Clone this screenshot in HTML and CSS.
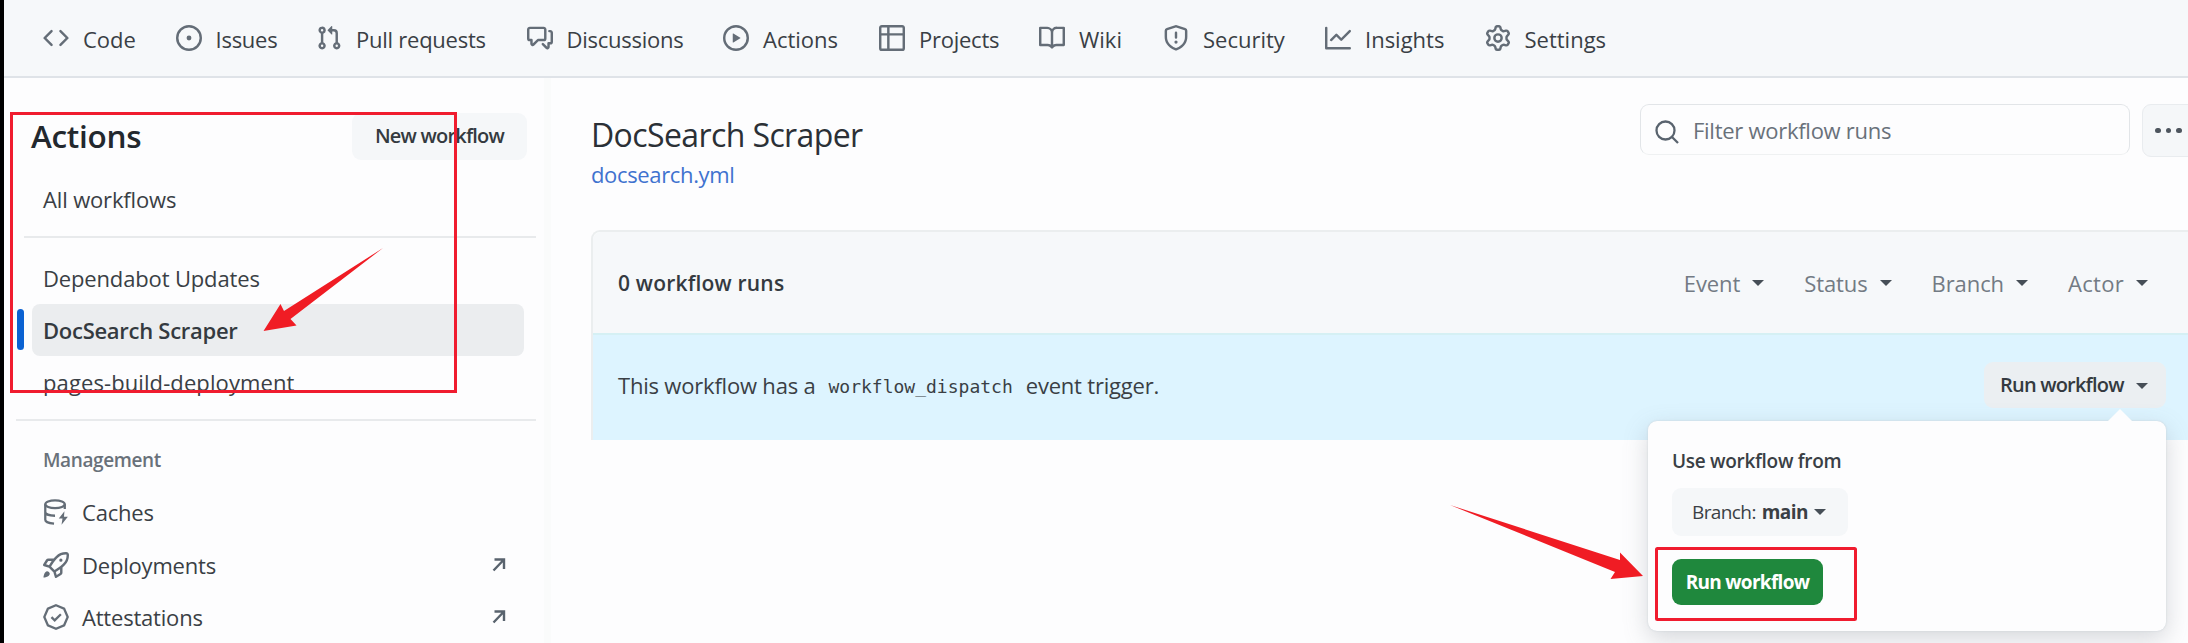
FILE: index.html
```html
<!DOCTYPE html>
<html lang="en">
<head>
<meta charset="utf-8">
<title>Actions</title>
<link rel="stylesheet" href="styles.css">
</head>
<body>
<nav class="repo-nav">
  <a class="tab"><svg class="icon" viewBox="0 0 16 16"><path d="m11.28 3.22 4.25 4.25a.75.75 0 0 1 0 1.06l-4.25 4.25a.749.749 0 0 1-1.275-.326.749.749 0 0 1 .215-.734L13.94 8l-3.72-3.72a.749.749 0 0 1 .326-1.275.749.749 0 0 1 .734.215Zm-6.56 0a.751.751 0 0 1 1.042.018.751.751 0 0 1 .018 1.042L2.06 8l3.72 3.72a.749.749 0 0 1-.326 1.275.749.749 0 0 1-.734-.215L.47 8.53a.75.75 0 0 1 0-1.06Z"/></svg><span>Code</span></a>
  <a class="tab tight"><svg class="icon" viewBox="0 0 16 16"><path d="M8 9.5a1.5 1.5 0 1 0 0-3 1.5 1.5 0 0 0 0 3Z"/><path d="M8 0a8 8 0 1 1 0 16A8 8 0 0 1 8 0ZM1.5 8a6.5 6.5 0 1 0 13 0 6.5 6.5 0 0 0-13 0Z"/></svg><span>Issues</span></a>
  <a class="tab tight"><svg class="icon" viewBox="0 0 16 16"><path d="M1.5 3.25a2.25 2.25 0 1 1 3 2.122v5.256a2.251 2.251 0 1 1-1.5 0V5.372A2.25 2.25 0 0 1 1.5 3.25Zm5.677-.177L9.573.677A.25.25 0 0 1 10 .854V2.5h1A2.5 2.5 0 0 1 13.5 5v5.628a2.251 2.251 0 1 1-1.5 0V5a1 1 0 0 0-1-1h-1v1.646a.25.25 0 0 1-.427.177L7.177 3.427a.25.25 0 0 1 0-.354ZM3.75 2.5a.75.75 0 1 0 0 1.5.75.75 0 0 0 0-1.5Zm0 9.5a.75.75 0 1 0 0 1.5.75.75 0 0 0 0-1.5Zm8.25.75a.75.75 0 1 0 1.5 0 .75.75 0 0 0-1.5 0Z"/></svg><span>Pull requests</span></a>
  <a class="tab tight"><svg class="icon" viewBox="0 0 16 16"><path d="M1.75 1h8.5c.966 0 1.75.784 1.75 1.75v5.5A1.75 1.75 0 0 1 10.25 10H7.061l-2.574 2.573A1.458 1.458 0 0 1 2 11.543V10h-.25A1.75 1.75 0 0 1 0 8.25v-5.5C0 1.784.784 1 1.75 1ZM1.5 2.75v5.5c0 .138.112.25.25.25h1a.75.75 0 0 1 .75.75v2.19l2.72-2.72a.749.749 0 0 1 .53-.22h3.5a.25.25 0 0 0 .25-.25v-5.5a.25.25 0 0 0-.25-.25h-8.5a.25.25 0 0 0-.25.25Zm13 2a.25.25 0 0 0-.25-.25h-.5a.75.75 0 0 1 0-1.5h.5c.966 0 1.75.784 1.75 1.75v5.5A1.75 1.75 0 0 1 14.25 12H14v1.543a1.458 1.458 0 0 1-2.487 1.03L9.22 12.28a.749.749 0 0 1 .326-1.275.749.749 0 0 1 .734.215l2.22 2.22v-2.19a.75.75 0 0 1 .75-.75h1a.25.25 0 0 0 .25-.25Z"/></svg><span>Discussions</span></a>
  <a class="tab"><svg class="icon" viewBox="0 0 16 16"><path d="M8 0a8 8 0 1 1 0 16A8 8 0 0 1 8 0ZM1.5 8a6.5 6.5 0 1 0 13 0 6.5 6.5 0 0 0-13 0Zm4.879-2.773 4.264 2.559a.25.25 0 0 1 0 .428l-4.264 2.559A.25.25 0 0 1 6 10.559V5.442a.25.25 0 0 1 .379-.215Z"/></svg><span>Actions</span></a>
  <a class="tab tight"><svg class="icon" viewBox="0 0 16 16"><path d="M0 1.75C0 .784.784 0 1.75 0h12.5C15.216 0 16 .784 16 1.75v12.5A1.75 1.75 0 0 1 14.25 16H1.75A1.75 1.75 0 0 1 0 14.25ZM6.5 6.5v8h7.75a.25.25 0 0 0 .25-.25V6.5Zm8-1.5V1.75a.25.25 0 0 0-.25-.25H6.5V5Zm-13 1.5v7.75c0 .138.112.25.25.25H5v-8ZM5 5V1.5H1.75a.25.25 0 0 0-.25.25V5Z"/></svg><span>Projects</span></a>
  <a class="tab"><svg class="icon" viewBox="0 0 16 16"><path d="M0 1.75A.75.75 0 0 1 .75 1h4.253c1.227 0 2.317.59 3 1.501A3.743 3.743 0 0 1 11.006 1h4.245a.75.75 0 0 1 .75.75v10.5a.75.75 0 0 1-.75.75h-4.507a2.25 2.25 0 0 0-1.591.659l-.622.621a.75.75 0 0 1-1.06 0l-.622-.621A2.25 2.25 0 0 0 5.258 13H.75a.75.75 0 0 1-.75-.75Zm7.251 10.324.004-5.073-.002-2.253A2.25 2.25 0 0 0 5.003 2.5H1.5v9h3.757a3.75 3.75 0 0 1 1.994.574ZM8.755 4.75l-.004 7.322a3.752 3.752 0 0 1 1.992-.572H14.5v-9h-3.495a2.25 2.25 0 0 0-2.25 2.25Z"/></svg><span>Wiki</span></a>
  <a class="tab"><svg class="icon" viewBox="0 0 16 16"><path d="M7.467.133a1.748 1.748 0 0 1 1.066 0l5.25 1.68A1.75 1.75 0 0 1 15 3.48V7c0 1.566-.32 3.182-1.303 4.682-.983 1.498-2.585 2.813-5.032 3.855a1.697 1.697 0 0 1-1.33 0c-2.447-1.042-4.049-2.357-5.032-3.855C1.32 10.182 1 8.566 1 7V3.48a1.75 1.75 0 0 1 1.217-1.667Zm.61 1.429a.25.25 0 0 0-.153 0l-5.25 1.68a.25.25 0 0 0-.174.238V7c0 1.358.275 2.666 1.057 3.86.784 1.194 2.121 2.34 4.366 3.297a.196.196 0 0 0 .154 0c2.245-.956 3.582-2.104 4.366-3.298C13.225 9.666 13.5 8.36 13.5 7V3.48a.251.251 0 0 0-.174-.237l-5.25-1.68ZM8.75 4.75v3a.75.75 0 0 1-1.5 0v-3a.75.75 0 0 1 1.5 0ZM9 10.5a1 1 0 1 1-2 0 1 1 0 0 1 2 0Z"/></svg><span>Security</span></a>
  <a class="tab"><svg class="icon" viewBox="0 0 16 16"><path d="M1.5 1.75V13.5h13.75a.75.75 0 0 1 0 1.5H.75a.75.75 0 0 1-.75-.75V1.75a.75.75 0 0 1 1.5 0Zm14.28 2.53-5.25 5.25a.75.75 0 0 1-1.06 0L7 7.06 4.28 9.78a.751.751 0 0 1-1.042-.018.751.751 0 0 1-.018-1.042l3.25-3.25a.75.75 0 0 1 1.06 0L10 7.94l4.72-4.72a.751.751 0 0 1 1.042.018.751.751 0 0 1 .018 1.042Z"/></svg><span>Insights</span></a>
  <a class="tab"><svg class="icon" viewBox="0 0 16 16"><path d="M8 0a8.2 8.2 0 0 1 .701.031C9.444.095 9.99.645 10.16 1.29l.288 1.107c.018.066.079.158.212.224.231.114.454.243.668.386.123.082.233.09.299.071l1.103-.303c.644-.176 1.392.021 1.82.63.27.385.506.792.704 1.218.315.675.111 1.422-.364 1.891l-.814.806c-.049.048-.098.147-.088.294.016.257.016.515 0 .772-.01.147.038.246.088.294l.814.806c.475.469.679 1.216.364 1.891a7.977 7.977 0 0 1-.704 1.217c-.428.61-1.176.807-1.82.63l-1.102-.302c-.067-.019-.177-.011-.3.071a5.909 5.909 0 0 1-.668.386c-.133.066-.194.158-.211.224l-.29 1.106c-.168.646-.715 1.196-1.458 1.26a8.006 8.006 0 0 1-1.402 0c-.743-.064-1.289-.614-1.458-1.26l-.289-1.106c-.018-.066-.079-.158-.212-.224a5.738 5.738 0 0 1-.668-.386c-.123-.082-.233-.09-.299-.071l-1.103.303c-.644.176-1.392-.021-1.82-.63a8.12 8.12 0 0 1-.704-1.218c-.315-.675-.111-1.422.363-1.891l.815-.806c.05-.048.098-.147.088-.294a6.214 6.214 0 0 1 0-.772c.01-.147-.038-.246-.088-.294l-.815-.806C.635 6.045.431 5.298.746 4.623a7.92 7.92 0 0 1 .704-1.217c.428-.61 1.176-.807 1.82-.63l1.102.302c.067.019.177.011.3-.071.214-.143.437-.272.668-.386.133-.066.194-.158.211-.224l.29-1.106C6.009.645 6.556.095 7.299.03 7.53.01 7.764 0 8 0Zm-.571 1.525c-.036.003-.108.036-.137.146l-.289 1.105c-.147.561-.549.967-.998 1.189-.173.086-.34.183-.5.29-.417.278-.97.423-1.529.27l-1.103-.303c-.109-.03-.175.016-.195.045-.22.312-.412.644-.573.99-.014.031-.021.11.059.19l.815.806c.411.406.562.957.53 1.456a4.709 4.709 0 0 0 0 .582c.032.499-.119 1.05-.53 1.456l-.815.806c-.081.08-.073.159-.059.19.162.346.353.677.573.989.02.03.085.076.195.046l1.102-.303c.56-.153 1.113-.008 1.53.27.161.107.328.204.501.29.447.222.85.629.997 1.189l.289 1.105c.029.109.101.143.137.146a6.6 6.6 0 0 0 1.142 0c.036-.003.108-.036.137-.146l.289-1.105c.147-.561.549-.967.998-1.189.173-.086.34-.183.5-.29.417-.278.97-.423 1.529-.27l1.103.303c.109.029.175-.016.195-.045.22-.313.411-.644.573-.99.014-.031.021-.11-.059-.19l-.815-.806c-.411-.406-.562-.957-.53-1.456a4.709 4.709 0 0 0 0-.582c-.032-.499.119-1.05.53-1.456l.815-.806c.081-.08.073-.159.059-.19a6.464 6.464 0 0 0-.573-.989c-.02-.03-.085-.076-.195-.046l-1.102.303c-.56.153-1.113.008-1.53-.27a4.44 4.44 0 0 0-.501-.29c-.447-.222-.85-.629-.997-1.189l-.289-1.105c-.029-.11-.101-.143-.137-.146a6.6 6.6 0 0 0-1.142 0ZM11 8a3 3 0 1 1-6 0 3 3 0 0 1 6 0ZM9.5 8a1.5 1.5 0 1 0-3.001.001A1.5 1.5 0 0 0 9.5 8Z"/></svg><span>Settings</span></a>
</nav>

<div class="layout">
  <aside class="sidebar">
    <header class="side-head"><h2 class="side-title">Actions</h2><button class="btn new-btn">New workflow</button></header>
    <a class="row first"><span>All workflows</span></a>
    <hr class="rule upper">
    <a class="row"><span>Dependabot Updates</span></a>
    <a class="row current"><span>DocSearch Scraper</span></a>
    <a class="row loose"><span>pages-build-deployment</span></a>
    <hr class="rule lower">
    <h3 class="group">Management</h3>
    <a class="row tool"><svg class="icon line" viewBox="0 0 16 16"><ellipse cx="7.4" cy="3.2" rx="6" ry="2.4"/><path d="M1.4 3.2v9.6c0 1.2 2.3 2.2 5.4 2.4M13.4 3.2v3M1.4 8c0 1.3 2.5 2.3 6 2.3"/><path class="solid" d="M13.2 7.6 9.7 12h2.3l-.6 3.8 3.9-4.9h-2.4z"/></svg><span>Caches</span></a>
    <a class="row tool"><svg class="icon" viewBox="0 0 16 16"><path d="M14.064 0h.186C15.216 0 16 .784 16 1.75v.186a8.752 8.752 0 0 1-2.564 6.186l-.458.459c-.314.314-.641.616-.979.904v3.207c0 .608-.315 1.172-.833 1.49l-2.774 1.707a.749.749 0 0 1-1.11-.418l-.954-3.102a1.214 1.214 0 0 1-.145-.125L3.754 9.816a1.218 1.218 0 0 1-.124-.145L.528 8.717a.749.749 0 0 1-.418-1.11l1.71-2.774A1.748 1.748 0 0 1 3.31 4h3.204c.288-.338.59-.665.904-.979l.459-.458A8.749 8.749 0 0 1 14.064 0ZM8.938 3.623h-.002l-.458.458c-.76.76-1.437 1.598-2.02 2.5l-1.5 2.317 2.143 2.143 2.317-1.5c.902-.583 1.74-1.26 2.499-2.02l.459-.458a7.25 7.25 0 0 0 2.123-5.127V1.75a.25.25 0 0 0-.25-.25h-.186a7.249 7.249 0 0 0-5.125 2.123ZM3.56 14.56c-.732.732-2.334 1.045-3.005 1.148a.234.234 0 0 1-.201-.064.234.234 0 0 1-.064-.201c.103-.671.416-2.273 1.15-3.003a1.502 1.502 0 1 1 2.12 2.12Zm6.94-3.935c-.088.06-.177.118-.266.175l-2.35 1.521.548 1.783 1.949-1.2a.25.25 0 0 0 .119-.213ZM3.678 8.116 5.2 5.766c.058-.09.117-.178.176-.266H3.309a.25.25 0 0 0-.213.119l-1.2 1.95ZM12 5a1 1 0 1 1-2 0 1 1 0 0 1 2 0Z"/></svg><span>Deployments</span><svg class="out" viewBox="0 0 14 14"><path d="M2.500 1.500H12v9.500M12 1.500 1.500 12.500"/></svg></a>
    <a class="row tool"><svg class="icon line" viewBox="0 0 16 16"><path d="M8 .8 13 2.9 15.2 8 13 13.1 8 15.2 3 13.1.8 8 3 2.9zM5.200 8.100l2 2 3.800-3.800"/></svg><span>Attestations</span><svg class="out" viewBox="0 0 14 14"><path d="M2.500 1.500H12v9.500M12 1.500 1.500 12.500"/></svg></a>
  </aside>

  <main class="content">
    <header class="page-head">
      <div class="names"><h1 class="title">DocSearch Scraper</h1><a class="file">docsearch.yml</a></div>
      <div class="search"><svg class="search-icon" viewBox="0 0 24 24"><circle cx="10.5" cy="10.5" r="9"/><path d="m17 17 6 6"/></svg><span>Filter workflow runs</span></div>
      <button class="more"><i class="dot"></i><i class="dot"></i><i class="dot"></i></button>
    </header>
    <section class="runs">
      <header class="runs-head">
        <strong class="count">0 workflow runs</strong>
        <div class="filters">
          <a class="filter"><span>Event</span><i class="caret"></i></a>
          <a class="filter"><span>Status</span><i class="caret"></i></a>
          <a class="filter"><span>Branch</span><i class="caret"></i></a>
          <a class="filter actor"><span>Actor</span><i class="caret"></i></a>
        </div>
      </header>
      <div class="notice">
        <p class="message"><span>This workflow has a</span><code class="code">workflow_dispatch</code><span>event trigger.</span></p>
        <div class="dispatch">
          <button class="btn run-btn"><span>Run workflow</span><i class="caret"></i></button>
          <div class="popover">
            <h4 class="label">Use workflow from</h4>
            <button class="branch-btn"><span>Branch:</span><b>main</b><i class="caret"></i></button>
            <button class="go-btn">Run workflow</button>
          </div>
        </div>
      </div>
    </section>
  </main>
</div>

<svg class="marks" viewBox="0 0 2188 643">
  <rect x="11.5" y="113.5" width="444" height="278"/>
  <rect x="1656.5" y="548.5" width="199" height="71" rx="1"/>
  <path d="M383 248 284 311 280.500 304 263.500 331 296.500 325.500 290.500 319z"/>
  <path d="M1450 505 1620 560 1620 552.500 1643 576 1610.500 579 1615 572z"/>
</svg>
</body>
</html>
```
FILE: styles.css
```css
* { box-sizing: border-box; }
body {
  margin: 0;
  width: 2188px;
  height: 643px;
  overflow: hidden;
  position: relative;
  background: #fdfdfe;
  border-left: 4px solid #000;
  font: 22px/30px "Open Sans", "Noto Sans", sans-serif;
  color: #3a3f45;
}
h1, h2, h3, h4, p { margin: 0; }
button { font: inherit; color: inherit; border: 0; padding: 0; white-space: nowrap; }
span, b { white-space: nowrap; }

.repo-nav {
  height: 78px;
  padding-left: 39px;
  background: #f6f8fa;
  border-bottom: 2px solid #dfe3e8;
  display: grid;
  grid-template-columns: 132.5px 140.5px 210.5px 196.5px 156px 160px 124px 162px 159.5px 160px;
  align-items: center;
}
.tab { display: flex; align-items: center; gap: 14px; padding-top: 2px; }
.tab.tight { letter-spacing: -.25px; }
.tab .icon { margin-top: -3px; }
.icon { width: 26px; height: 26px; fill: #646d77; flex: none; }
.icon.line { fill: none; stroke: #646d77; stroke-width: 1.4; }
.icon .solid { fill: #646d77; stroke: none; }

.layout { display: flex; height: 565px; }
.sidebar {
  width: 547px;
  flex: none;
  padding: 34px 8px 0 12px;
  border-right: 7px solid #fafbfb;
  overflow: hidden;
}
.side-head { display: flex; justify-content: space-between; align-items: center; height: 48px; padding: 0 9px 0 15px; }
.side-title { font-size: 31.5px; font-weight: 600; line-height: 48px; letter-spacing: -.3px; color: #23282e; }
.btn { background: #f5f7f9; border-radius: 9px; font-size: 20px; font-weight: 600; letter-spacing: -.8px; color: #343a40; }
.new-btn { width: 175px; height: 47px; }
.row { display: flex; align-items: center; height: 52px; margin: 0 12px 0 16px; padding-left: 11px; border-radius: 8px; letter-spacing: -.15px; }
.row.first { margin-top: 13px; }
.row.loose { letter-spacing: .1px; }
.rule { border: 0; height: 2px; background: #e8eaec; }
.rule.upper { margin: 11px 0 14px 8px; }
.rule.lower { margin: 11px 0 12px 0; }
.row.current { position: relative; background: #ebedef; font-weight: 600; letter-spacing: -.28px; color: #343a40; }
.current::before {
  content: "";
  position: absolute;
  left: -15px;
  top: 5px;
  width: 7px;
  height: 41px;
  border-radius: 4px;
  background: #0b62d2;
}
.group { height: 53px; padding-left: 27px; font-size: 19px; font-weight: 600; line-height: 55px; letter-spacing: -.4px; color: #69717a; }
.row.tool { height: 52.4px; gap: 13px; letter-spacing: -.2px; }
.out { width: 14px; height: 14px; margin-left: auto; margin-right: 18px; fill: none; stroke: #59636e; stroke-width: 2.4; }

.content { flex: 1; min-width: 0; padding-left: 40px; }
.page-head { display: flex; height: 152px; padding-top: 26px; }
.names { width: 1049px; flex: none; }
.title { font-size: 32px; font-weight: 400; line-height: 62px; letter-spacing: -.6px; color: #2b3036; }
.file { display: block; line-height: 30px; margin-top: -7px; letter-spacing: -.35px; color: #3f72cf; }
.search {
  display: flex;
  flex: none;
  align-items: center;
  gap: 14px;
  width: 490px;
  height: 51px;
  padding-left: 14px;
  border: 1px solid #e2e5e8;
  border-bottom-color: #eff1f2;
  border-radius: 9px;
  letter-spacing: -.27px;
  color: #69717a;
}
.search-icon { width: 24px; height: 24px; margin-top: 4px; fill: none; stroke: #59636e; stroke-width: 2.3; }
.more {
  display: flex;
  flex: none;
  align-items: center;
  gap: 5px;
  width: 70px;
  height: 53px;
  margin-left: 12px;
  padding-left: 12px;
  background: #f5f7f9;
  border: 1px solid #e9ecef;
  border-radius: 9px;
}
.dot { width: 5.5px; height: 5.5px; border-radius: 50%; background: #4d555e; }

.runs { border: 2px solid #ebeeef; border-right: 0; border-bottom: 0; border-radius: 9px 0 0 0; }
.runs-head { display: flex; justify-content: space-between; align-items: center; height: 101px; padding: 1px 40px 0 25px; background: #f6f8fa; border-radius: 8px 0 0 0; }
.count { font-weight: 600; font-size: 21px; letter-spacing: .2px; color: #343a40; }
.filters { display: flex; gap: 40px; color: #737b84; }
.filter { display: flex; align-items: center; gap: 12px; letter-spacing: -.1px; }
.filter.actor { letter-spacing: .3px; }
.caret { width: 0; height: 0; border: 6.5px solid transparent; border-top-color: #464e57; border-bottom: 0; }
.notice { display: flex; justify-content: space-between; align-items: center; height: 107px; padding: 0 22px 6px 25px; background: #ddf4ff; border-top: 2px solid #d5f0f4; }
.message { display: flex; align-items: center; letter-spacing: -.2px; }
.code { margin: 5px 13px 0; font: 18px/30px "DejaVu Sans Mono", monospace; letter-spacing: 0; }
.dispatch { position: relative; }
.run-btn { display: flex; align-items: center; gap: 12px; width: 182px; height: 46px; padding-left: 16px; background: #ebeff2; }
.run-btn .caret { margin-top: 3px; }
.popover {
  position: absolute;
  right: 0;
  top: 59px;
  width: 518px;
  height: 210px;
  padding: 24px 24px 0;
  background: #fdfdfe;
  border-radius: 9px;
  box-shadow: 0 0 2px #c9d0d6, 0 8px 24px rgba(100, 110, 120, .26);
}
.popover::before {
  content: "";
  position: absolute;
  right: 34px;
  top: -12px;
  border: 12px solid transparent;
  border-top: 0;
  border-bottom-color: #fdfdfe;
}
.label { font-size: 19px; font-weight: 600; line-height: 32px; letter-spacing: -.3px; }
.branch-btn { display: flex; align-items: center; gap: 6px; width: 176px; height: 48px; margin-top: 11px; padding-left: 20px; border-radius: 9px; background: #f5f7f9; font-size: 19px; letter-spacing: -.6px; }
.go-btn { display: block; width: 151px; height: 46px; margin-top: 23px; border-radius: 9px; background: #1f883d; color: #fff; font-size: 19px; font-weight: 700; letter-spacing: -.7px; }

.marks { position: absolute; left: -4px; top: 0; width: 2188px; height: 643px; fill: none; pointer-events: none; }
.marks rect { stroke: #f01c2f; stroke-width: 3; }
.marks path { fill: #f01c24; }
```
